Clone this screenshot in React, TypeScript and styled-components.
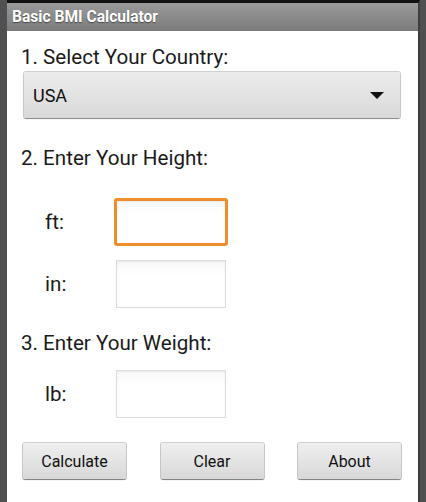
import React from "react";
import styled, { createGlobalStyle } from "styled-components";

const GlobalStyle = createGlobalStyle`
  html, body {
    margin: 0;
    padding: 0;
    background: #4f4f4f;
  }
  body {
    font-family: Roboto, "Noto Sans", sans-serif;
  }
`;

const Frame = styled.div`
  box-sizing: border-box;
  width: 426px;
  height: 502px;
  padding: 0 8px 0 7px;
  background: #505050;
  display: flex;
`;

const Screen = styled.div`
  flex: 1;
  display: flex;
  flex-direction: column;
  background: #ffffff;
  border-top: 3px solid #111;
  border-right: 2px solid #3e3e3e;
  margin-right: -2px;
`;

const TitleBar = styled.div`
  height: 28px;
  display: flex;
  align-items: center;
  padding-left: 5px;
  background: linear-gradient(#9a9a9a, #7b7b7b);
  color: #ffffff;
  font-family: Roboto, sans-serif;
  font-weight: bold;
  font-size: 15.6px;
  text-shadow: 0 1px 1px rgba(0, 0, 0, 0.45);
`;

const Content = styled.div`
  display: flex;
  flex-direction: column;
  padding: 14px 17px 0 14px;
`;

const Heading = styled.div<{ $top?: number }>`
  font-size: 20.6px;
  color: #1a1a1a;
  line-height: 24px;
  margin-top: ${(p) => p.$top ?? 0}px;
`;

const Spinner = styled.div`
  box-sizing: border-box;
  margin-top: 3px;
  margin-left: 3px;
  width: 376px;
  height: 46px;
  display: flex;
  align-items: center;
  justify-content: space-between;
  padding: 0 16px 0 9px;
  border-radius: 2px;
  background: linear-gradient(#ececec, #d9d9d9);
  box-shadow: 0 1px 1px rgba(0, 0, 0, 0.35), 0 0 0 1px #d0d0d0;
  font-size: 18px;
  color: #111;
`;

const Arrow = styled.span`
  width: 0;
  height: 0;
  border-left: 7px solid transparent;
  border-right: 7px solid transparent;
  border-top: 7px solid #111;
`;

const FieldRow = styled.div<{ $top: number }>`
  display: flex;
  align-items: center;
  margin-top: ${(p) => p.$top}px;
`;

const FieldLabel = styled.div`
  width: 71px;
  padding-left: 24px;
  font-size: 20.6px;
  color: #1a1a1a;
`;

const Input = styled.div<{ $focused?: boolean }>`
  box-sizing: border-box;
  width: ${(p) => (p.$focused ? 114 : 110)}px;
  height: 48px;
  margin-left: ${(p) => (p.$focused ? -2 : 0)}px;
  border-radius: ${(p) => (p.$focused ? 3 : 0)}px;
  border: ${(p) => (p.$focused ? "3px solid #ee8d2a" : "1px solid #dcdcdc")};
  background: linear-gradient(#f7f7f7, #ffffff 30%);
  box-shadow: inset 0 1px 2px rgba(0, 0, 0, 0.06);
`;

const ButtonRow = styled.div`
  display: flex;
  justify-content: space-between;
  margin-top: 25px;
  padding: 0 0 0 2px;
`;

const Button = styled.div`
  box-sizing: border-box;
  width: 103px;
  height: 36px;
  display: flex;
  align-items: center;
  justify-content: center;
  border-radius: 2px;
  background: linear-gradient(#efefef, #d8d8d8);
  box-shadow: 0 1px 1px rgba(0, 0, 0, 0.4), 0 0 0 1px #cfcfcf;
  font-size: 16px;
  color: #111;
`;

export default function App() {
  return (
    <>
      <GlobalStyle />
      <Frame>
        <Screen>
          <TitleBar>Basic BMI Calculator</TitleBar>
          <Content>
            <Heading>1. Select Your Country:</Heading>
            <Spinner>
              <span>USA</span>
              <Arrow />
            </Spinner>
            <Heading $top={28}>2. Enter Your Height:</Heading>
            <FieldRow $top={28}>
              <FieldLabel>ft:</FieldLabel>
              <Input $focused />
            </FieldRow>
            <FieldRow $top={14}>
              <FieldLabel>in:</FieldLabel>
              <Input />
            </FieldRow>
            <Heading $top={23}>3. Enter Your Weight:</Heading>
            <FieldRow $top={15}>
              <FieldLabel>lb:</FieldLabel>
              <Input />
            </FieldRow>
            <ButtonRow>
              <Button>Calculate</Button>
              <Button>Clear</Button>
              <Button>About</Button>
            </ButtonRow>
          </Content>
        </Screen>
      </Frame>
    </>
  );
}
